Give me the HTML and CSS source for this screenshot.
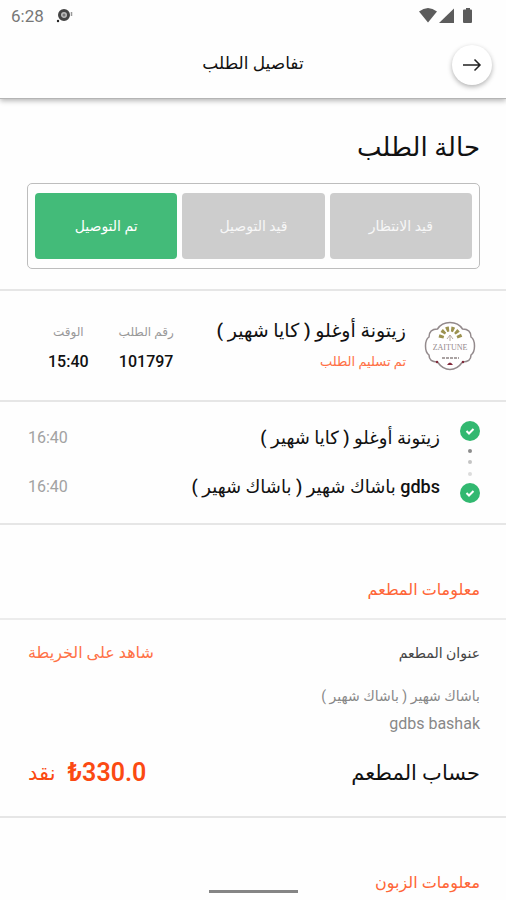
FILE: index.html
```html
<!DOCTYPE html>
<html lang="ar" dir="rtl">
<head>
<meta charset="utf-8">
<meta name="viewport" content="width=device-width, initial-scale=1">
<title>تفاصيل الطلب</title>
<link rel="stylesheet" href="styles.css">
</head>
<body>
<header class="app-header">
  <div class="status-bar" dir="ltr">
    <span class="clock">6:28</span>
    <svg class="notice" viewBox="0 0 18 16" aria-hidden="true"><circle cx="8" cy="7" r="4.5" fill="#bbb" stroke="#444" stroke-width="3"/><circle cx="8" cy="7" r="1.5" fill="#777"/><circle cx="2" cy="13" r="1.2" fill="#222"/><path d="M15.500 4v4" stroke="#999" stroke-width="1.500"/></svg>
    <span class="spacer"></span>
    <svg class="signals" viewBox="0 0 54 16" aria-hidden="true" fill="#5c5c5c"><path d="M0 3.500Q9-3.500 18 3.500L9 14.500Z"/><path d="M20 15 35 .5V15Z"/><path d="M44 2.500q0-1 1-1h2V0h4v1.500h1q1 0 1 1V14q0 1-1 1h-7q-1 0-1-1Z"/></svg>
  </div>
  <div class="title-bar">
    <button class="back" type="button" aria-label="رجوع"><svg viewBox="0 0 20 14" aria-hidden="true"><path d="M1 7h17M12.500 1.500 18 7l-5.500 5.500"/></svg></button>
    <h1>تفاصيل الطلب</h1>
  </div>
</header>
<main>
  <section class="progress">
    <h2>حالة الطلب</h2>
    <ol class="steps">
      <li>قيد الانتظار</li>
      <li>قيد التوصيل</li>
      <li class="active">تم التوصيل</li>
    </ol>
  </section>
  <section class="order">
    <svg class="logo" viewBox="0 0 52 50" aria-hidden="true">
      <path d="M26 1.500C20 1.500 16 4 13.500 8C8 8 5 11 5 16C2 18 1.500 21 1.500 25S2 32 5 34C5 39 8 41 13.500 41C17 46 20 48.500 26 48.500S35 46 38.500 41C44 41 47 39 47 34C50 32 50.500 29 50.500 25S50 18 47 16C47 11 44 8 38.500 8C36 4 32 1.500 26 1.500Z" fill="#fff" stroke="#938a8c" stroke-width="1.500"/>
      <path d="M17 17Q19 8 26 8T36 17" fill="none" stroke="#9c9250" stroke-width="5" stroke-dasharray="3 2"/>
      <path d="M23 18l3-4 3 4M26 15v5" fill="none" stroke="#b7a9a0"/>
      <text x="26" y="29" text-anchor="middle">ZAITUNE</text>
      <path d="M18 37h17" stroke="#aaa3a3" stroke-width="2" stroke-dasharray="3 1"/>
      <path d="M23 44q3-5 6 0Z" fill="#82283a"/><circle cx="13" cy="41" r="1.200" fill="#82283a"/><circle cx="39" cy="41" r="1.200" fill="#82283a"/>
    </svg>
    <div class="shop">
      <h3>زيتونة أوغلو ( كايا شهير )</h3>
      <p>تم تسليم الطلب</p>
    </div>
    <dl class="facts">
      <div><dt>رقم الطلب</dt><dd>101797</dd></div>
      <div><dt>الوقت</dt><dd>15:40</dd></div>
    </dl>
  </section>
  <section class="route">
    <div class="track" aria-hidden="true">
      <svg class="check" viewBox="0 0 20 20"><circle cx="10" cy="10" r="10"/><path d="m6.500 10 2.500 2.500L13.500 8"/></svg>
      <i></i><i></i><i></i>
      <svg class="check" viewBox="0 0 20 20"><circle cx="10" cy="10" r="10"/><path d="m6.500 10 2.500 2.500L13.500 8"/></svg>
    </div>
    <ul class="stops">
      <li><span>زيتونة أوغلو ( كايا شهير )</span><time>16:40</time></li>
      <li><span>gdbs باشاك شهير ( باشاك شهير )</span><time>16:40</time></li>
    </ul>
  </section>
  <h2 class="group-title">معلومات المطعم</h2>
  <section class="restaurant">
    <div class="row"><h3>عنوان المطعم</h3><a href="#map">شاهد على الخريطة</a></div>
    <address><p>باشاك شهير ( باشاك شهير )</p><p class="latin">gdbs bashak</p></address>
    <div class="row bill"><h3>حساب المطعم</h3><p><span>₺330.0</span><span>نقد</span></p></div>
  </section>
  <h2 class="group-title">معلومات الزبون</h2>
</main>
<div class="home-indicator"></div>
</body>
</html>
```
FILE: styles.css
```css
* { box-sizing: border-box; }
body, h1, h2, h3, p, ol, ul, dl, dd, address { margin: 0; padding: 0; }
ol, ul { list-style: none; }
html { height: 100%; overflow: hidden; }
body {
  height: 100%;
  overflow: hidden;
  background: #fefefe;
  color: #111;
  font-family: Roboto, "DejaVu Sans", sans-serif;
  font-size: 16px;
  line-height: 24px;
}
h1, h2, h3 { font-weight: 500; }
svg { display: block; flex: none; }

.app-header {
  background: #fefefe;
  border-bottom: 1px solid #b4b4b4;
  box-shadow: 0 2px 5px rgba(0, 0, 0, .28);
}
.status-bar {
  display: flex;
  align-items: center;
  gap: 12px;
  height: 32px;
  padding: 0 33px 0 11px;
  color: #777;
}
.clock { font-size: 17px; }
.notice { width: 18px; height: 16px; }
.spacer { flex: 1; }
.signals { width: 54px; height: 16px; }
.title-bar {
  display: grid;
  grid-template-columns: 40px 1fr 40px;
  align-items: center;
  height: 66px;
  padding: 0 14px;
}
.title-bar h1 { padding-bottom: 4px; font-size: 17px; text-align: center; }
.back {
  display: grid;
  place-items: center;
  width: 40px;
  height: 40px;
  padding: 0;
  border: 0;
  border-radius: 50%;
  background: #fff;
  box-shadow: 0 2px 5px rgba(0, 0, 0, .3);
}
.back svg {
  width: 20px;
  height: 14px;
  fill: none;
  stroke: #222;
  stroke-width: 1.5;
}

section { border-bottom: 2px solid #e6e6e6; padding: 0 26px 0 28px; }
.progress { padding: 28px 26px 20px 27px; }
.progress h2 { font-size: 26px; line-height: 40px; }
.steps {
  display: grid;
  grid-template-columns: repeat(3, 1fr);
  gap: 5px;
  margin-top: 16px;
  padding: 9px 7px;
  border: 1px solid #bdbdbd;
  border-radius: 5px;
}
.steps li {
  height: 66px;
  border-radius: 4px;
  background: #cdcdcd;
  color: #f7f7f7;
  font-size: 14px;
  line-height: 66px;
  text-align: center;
}
.steps .active { background: #43bb79; color: #fff; }

.order { display: flex; align-items: center; height: 111px; }
.logo { width: 52px; height: 50px; margin-inline: 4px 18px; }
.logo text { font: 8px "Liberation Serif", serif; fill: #958a8d; }
.shop { flex: 1; white-space: nowrap; }
.shop h3 { font-size: 19px; line-height: 32px; }
.shop p { color: #ff7146; font-size: 13px; line-height: 30px; }
.facts { display: flex; gap: 30px; text-align: center; white-space: nowrap; padding-top: 2px; padding-inline-end: 20px; }
.facts dt { color: #999; font-size: 12px; line-height: 30px; }
.facts dd { font-weight: 500; line-height: 30px; }

.route { display: flex; gap: 20px; padding-top: 11px; padding-bottom: 12px; }
.track { display: flex; flex-direction: column; align-items: center; justify-content: space-between; padding: 8px 0; }
.check { width: 20px; height: 20px; fill: #32b870; }
.check path { fill: none; stroke: #fff; stroke-width: 2; }
.track i { width: 4px; height: 4px; border-radius: 50%; background: #8c8c8c; }
.track i + i { background: #c4c4c4; }
.track i + i + i { background: #dcdcdc; }
.stops { flex: 1; }
.stops li { display: flex; justify-content: space-between; align-items: center; height: 49px; font-size: 18px; font-weight: 500; }
.stops time { color: #a2a2a2; font-size: 16px; font-weight: 400; }

.group-title {
  padding: 48px 26px 11px 28px;
  border-bottom: 2px solid #ececec;
  color: #ff6537;
  font-size: 16px;
  font-weight: 400;
  line-height: 34px;
}
.restaurant { padding-top: 17px; padding-bottom: 23px; }
.row { display: flex; justify-content: space-between; align-items: center; }
.row h3 { color: #444; font-size: 14px; font-weight: 400; line-height: 32px; }
.row a { color: #ff7146; font-size: 16px; text-decoration: none; }
address { margin-top: 14px; color: #888; font-size: 14px; font-style: normal; line-height: 27px; }
.latin { font-size: 16px; }
.bill { margin-top: 16px; }
.bill h3 { color: #111; font-size: 21px; font-weight: 500; line-height: 40px; }
.bill p { display: flex; gap: 12px; color: #fb4a12; font-size: 25px; font-weight: 500; }
.bill p span:first-child { font-weight: 600; }
.bill p span + span { font-size: 21px; }
.home-indicator {
  position: fixed;
  bottom: 7px;
  left: 50%;
  width: 89px;
  height: 3px;
  margin-left: -44px;
  background: #858585;
}
```
